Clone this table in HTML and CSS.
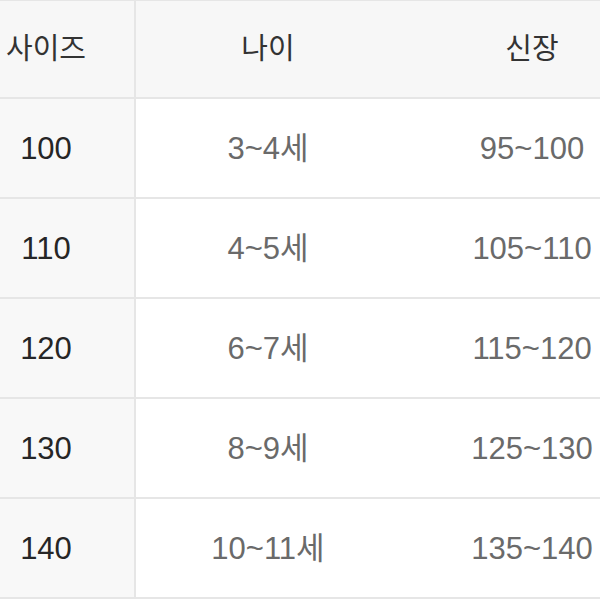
FILE: index.html
```html
<!DOCTYPE html>
<html lang="ko">
<head>
<meta charset="utf-8">
<link rel="stylesheet" href="styles.css">
</head>
<body>
<table class="size-table">
  <thead>
    <tr><th class="c1">사이즈</th><th class="c2">나이</th><th class="c3">신장</th></tr>
  </thead>
  <tbody>
    <tr><td class="size">100</td><td>3~4세</td><td>95~100</td></tr>
    <tr><td class="size">110</td><td>4~5세</td><td>105~110</td></tr>
    <tr><td class="size">120</td><td>6~7세</td><td>115~120</td></tr>
    <tr><td class="size">130</td><td>8~9세</td><td>125~130</td></tr>
    <tr><td class="size">140</td><td>10~11세</td><td>135~140</td></tr>
  </tbody>
</table>
</body>
</html>
```
FILE: styles.css
```css
html, body {
  margin: 0;
  padding: 0;
  background: #ffffff;
  overflow: hidden;
  width: 600px;
  height: 600px;
}
.size-table {
  border-collapse: collapse;
  table-layout: fixed;
  width: 704px;
  margin-left: -42px;
  margin-top: -1px;
  font-family: "Liberation Sans", "Noto Sans CJK KR", sans-serif;
  font-size: 29px;
  line-height: 1;
}
.size-table th,
.size-table td {
  border-top: 2px solid #e6e6e6;
  border-bottom: 2px solid #e6e6e6;
  border-left: 0;
  border-right: 0;
  padding: 0;
  text-align: center;
  vertical-align: middle;
}
.size-table .c1,
.size-table td.size {
  border-right: 2px solid #e6e6e6;
}
.size-table th {
  background: #f7f7f7;
  color: #333333;
  font-weight: normal;
  height: 96px;
}
.size-table td {
  height: 98px;
  color: #6a6a6a;
  background: #ffffff;
  font-size: 31px;
}
.size-table td.size {
  background: #f8f8f8;
  color: #262626;
}
.c1 { width: 176px; }
.c2 { width: 264px; }
.c3 { width: 264px; }
```
